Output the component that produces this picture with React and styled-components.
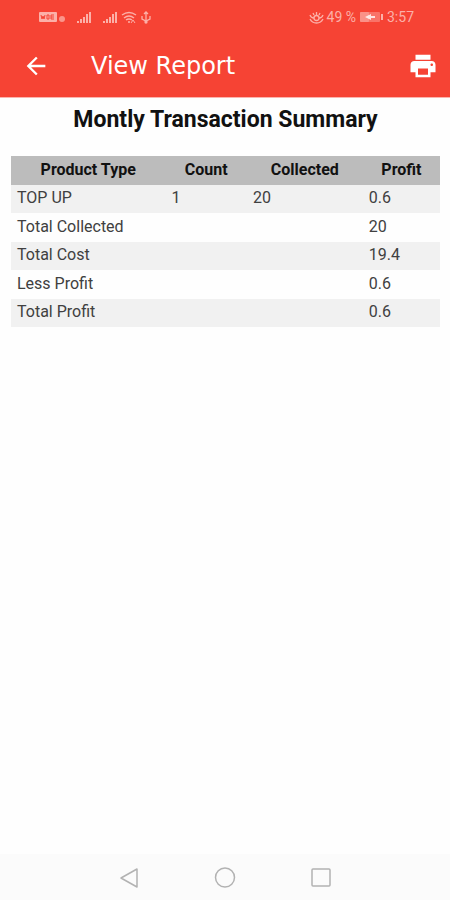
import React from "react";
import styled, { createGlobalStyle } from "styled-components";

const GlobalStyle = createGlobalStyle`
  * { box-sizing: border-box; }
  body { margin: 0; background: #fefefe; font-family: Roboto, sans-serif; }
`;

const Screen = styled.div`
  display: flex;
  flex-direction: column;
  min-height: 100vh;
`;

const Top = styled.header`
  background: #f64334;
  color: #fff;
  border-bottom: 1px solid #fbb4ae;
`;

const StatusBar = styled.div`
  display: flex;
  align-items: center;
  justify-content: space-between;
  height: 34px;
  padding: 0 36px 0 38px;
  color: #fcb0a8;
  font-size: 14px;
  line-height: 16px;
`;

const StatusGroup = styled.div`
  display: flex;
  align-items: center;
  gap: ${(p) => p.$gap}px;
`;

const StatusIcon = styled.svg`
  display: block;
  flex: none;
`;

const AppBar = styled.div`
  display: flex;
  align-items: center;
  height: 63px;
  padding: 0 11px 0 20px;
`;

const IconButton = styled.button`
  display: flex;
  align-items: center;
  justify-content: center;
  width: 32px;
  height: 32px;
  padding: 0;
  border: 0;
  background: none;
  color: #fff;
`;

const Title = styled.h1`
  flex: 1;
  margin: 0 0 0 39px;
  font: 400 24px/32px "DejaVu Sans", sans-serif;
`;

const Main = styled.main`
  flex: 1;
  padding: 8px 10px 0 11px;
`;

const Heading = styled.h2`
  margin: 0 0 22px;
  color: #111;
  font-size: 23px;
  line-height: 28px;
  font-weight: 700;
  text-align: center;
`;

const Table = styled.table`
  width: 100%;
  border-collapse: collapse;
  table-layout: fixed;
  color: #404040;
  font-size: 16px;
  line-height: 20px;
`;

const Col = styled.col`
  width: ${(p) => p.$share}%;
`;

const HeadCell = styled.th`
  height: 29px;
  padding: 0 0 2px;
  background: #bcbcbc;
  color: #111;
  font-weight: 700;
  text-align: center;
`;

const Row = styled.tr`
  height: 29px;
  &:nth-child(odd) {
    height: 28px;
    background: #f1f1f1;
  }
`;

const Cell = styled.td`
  padding: 0 6px 2px;
`;

const NavBar = styled.nav`
  display: flex;
  align-items: center;
  justify-content: center;
  gap: 64px;
  height: 46px;
  background: #fbfbfb;
`;

const NavButton = styled(IconButton)`
  color: #b2b2b2;
`;

const columns = [
  { name: "Product Type", share: 36 },
  { name: "Count", share: 19 },
  { name: "Collected", share: 27 },
  { name: "Profit", share: 18 },
];

const totals = [
  ["Total Collected", "20"],
  ["Total Cost", "19.4"],
  ["Less Profit", "0.6"],
  ["Total Profit", "0.6"],
];

function Signal() {
  return (
    <StatusIcon width="16" height="13" viewBox="0 0 16 13" fill="currentColor" aria-hidden="true">
      <path d="M1 10h2v2H1zM4 8h2v4H4zM7 6h2v6H7zM10 3h2v9h-2zM13 1h2v11h-2z" />
    </StatusIcon>
  );
}

function Status() {
  return (
    <StatusBar>
      <StatusGroup $gap={10}>
        <StatusIcon width="28" height="12" viewBox="0 0 28 12" aria-hidden="true">
          <rect x="1" y="1" width="18" height="10" rx="1" fill="currentColor" />
          <path d="M3 4l1 4 1-3 1 3 1-4M9 4v4M9 4h2v4H9M13 4v4M13 4h3M13 6h3M13 8h3" fill="none" stroke="#f64334" />
          <circle cx="24" cy="8" r="3" fill="currentColor" opacity=".75" />
        </StatusIcon>
        <Signal />
        <StatusGroup $gap={3}>
          <Signal />
          <StatusIcon width="16" height="13" viewBox="0 0 16 13" fill="none" stroke="currentColor" strokeWidth="1.5" aria-hidden="true">
            <path d="M1 4q7-5 14 0M3 7q5-4 10 0M5 9q3-2 6 0" />
            <circle cx="8" cy="11" r="1" fill="currentColor" stroke="none" />
            <path d="M10 12l2-3 2 3" strokeWidth="1" />
          </StatusIcon>
          <StatusIcon width="12" height="13" viewBox="0 0 12 13" fill="none" stroke="currentColor" strokeWidth="1.3" aria-hidden="true">
            <path d="M6 12V1M4 3l2-2 2 2M2 5v3l4 2 4-2V5" />
            <circle cx="6" cy="11" r="1" fill="currentColor" />
          </StatusIcon>
        </StatusGroup>
      </StatusGroup>
      <StatusGroup $gap={3}>
        <StatusIcon width="15" height="13" viewBox="0 0 15 13" fill="none" stroke="currentColor" strokeWidth="1.3" aria-hidden="true">
          <path d="M1 4q1 3 4 3M14 4q-1 3-4 3M7.500 1v3M4 2l1 2M11 2l-1 2M1 8q2 4 6.500 4T14 8" />
          <circle cx="7.500" cy="7" r="2.500" />
        </StatusIcon>
        <span>49 %</span>
        <StatusIcon width="25" height="12" viewBox="0 0 25 12" aria-hidden="true">
          <rect x="1" y="1" width="20" height="10" rx="1" fill="currentColor" opacity=".45" />
          <rect x="1" y="1" width="9" height="10" rx="1" fill="currentColor" opacity=".5" />
          <path d="M6 6l6-3v2h4v2h-4v2z" fill="#fff" opacity=".8" />
          <path d="M23 3v6" stroke="currentColor" strokeWidth="2" />
        </StatusIcon>
        <span>3:57</span>
      </StatusGroup>
    </StatusBar>
  );
}

export default function App() {
  return (
    <Screen>
      <GlobalStyle />
      <Top>
        <Status />
        <AppBar>
          <IconButton aria-label="Back">
            <svg width="28" height="28" viewBox="0 0 24 24" fill="currentColor">
              <path d="M20 11H7.830l5.590-5.590L12 4l-8 8 8 8 1.410-1.410L7.830 13H20v-2z" />
            </svg>
          </IconButton>
          <Title>View Report</Title>
          <IconButton aria-label="Print">
            <svg width="30" height="30" viewBox="0 0 24 24" fill="currentColor">
              <path d="M19 8H5c-1.660 0-3 1.340-3 3v6h4v4h12v-4h4v-6c0-1.660-1.340-3-3-3zm-3 11H8v-5h8v5zm3-7c-.550 0-1-.450-1-1s.450-1 1-1 1 .450 1 1-.450 1-1 1zm-1-9H6v4h12V3z" />
            </svg>
          </IconButton>
        </AppBar>
      </Top>
      <Main>
        <Heading>Montly Transaction Summary</Heading>
        <Table>
          <colgroup>
            {columns.map((c) => (
              <Col key={c.name} $share={c.share} />
            ))}
          </colgroup>
          <thead>
            <tr>
              {columns.map((c) => (
                <HeadCell key={c.name} scope="col">{c.name}</HeadCell>
              ))}
            </tr>
          </thead>
          <tbody>
            <Row>
              <Cell>TOP UP</Cell>
              <Cell>1</Cell>
              <Cell>20</Cell>
              <Cell>0.6</Cell>
            </Row>
            {totals.map(([label, value]) => (
              <Row key={label}>
                <Cell colSpan={3}>{label}</Cell>
                <Cell>{value}</Cell>
              </Row>
            ))}
          </tbody>
        </Table>
      </Main>
      <NavBar aria-label="System">
        <NavButton aria-label="Back">
          <svg width="22" height="22" viewBox="0 0 22 22" fill="none" stroke="currentColor" strokeWidth="1.500" strokeLinejoin="round">
            <path d="M19 3v18L3 12z" />
          </svg>
        </NavButton>
        <NavButton aria-label="Home">
          <svg width="22" height="22" viewBox="0 0 22 22" fill="none" stroke="currentColor" strokeWidth="1.500">
            <circle cx="11" cy="11.500" r="9.500" />
          </svg>
        </NavButton>
        <NavButton aria-label="Recent apps">
          <svg width="22" height="22" viewBox="0 0 22 22" fill="none" stroke="currentColor" strokeWidth="1.500">
            <rect x="2" y="3" width="18" height="17" rx="1" />
          </svg>
        </NavButton>
      </NavBar>
    </Screen>
  );
}
